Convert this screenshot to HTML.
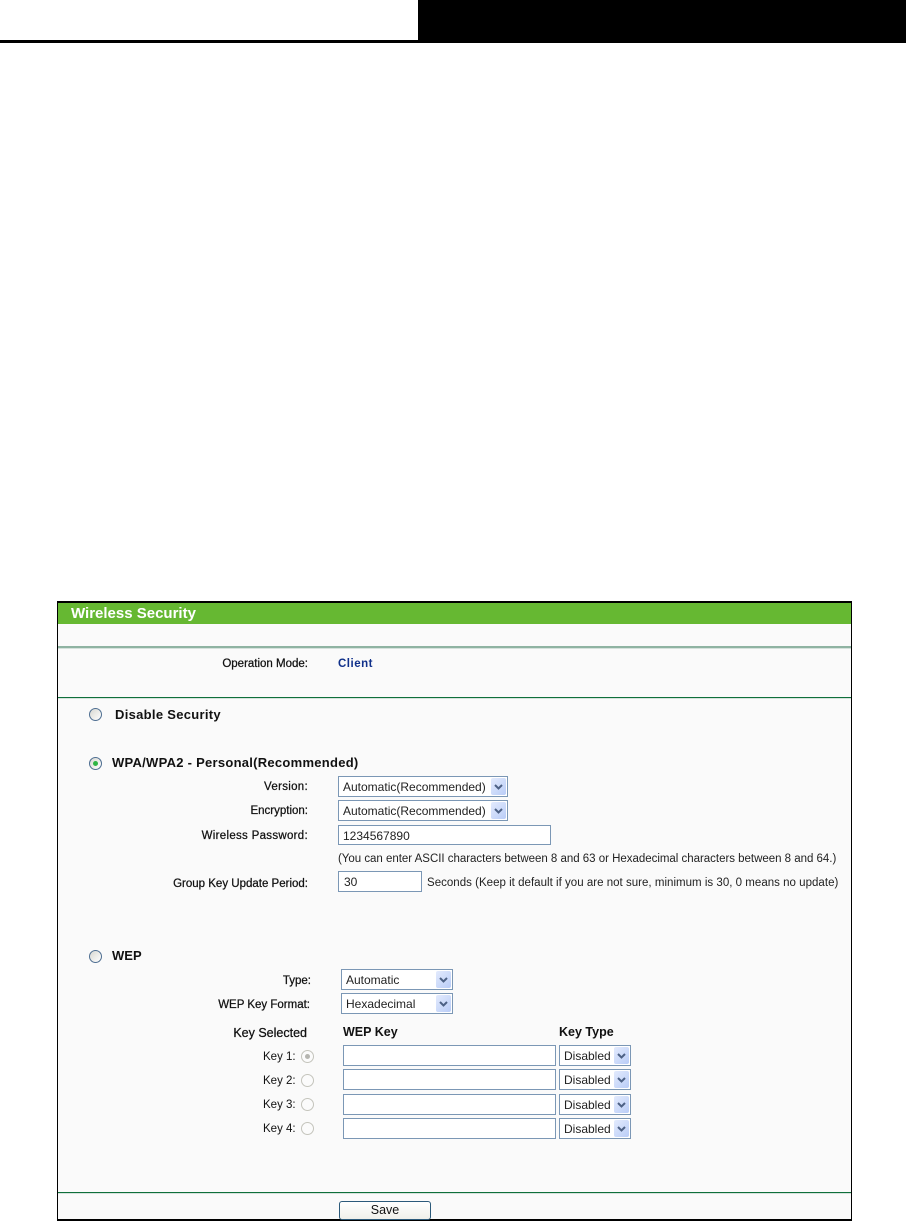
<!DOCTYPE html>
<html><head><meta charset="utf-8"><style>
html,body{margin:0;padding:0;background:#fff}
body{position:relative;width:906px;height:1221px;overflow:hidden;font-family:"Liberation Sans",Arial,sans-serif;color:#000}
div{position:absolute;box-sizing:border-box}
.t{white-space:nowrap;line-height:16px;height:16px;font-size:11.5px;color:#111}
.r{text-align:right;-webkit-text-stroke:.25px #111}
.b{font-weight:bold;font-size:13px}
.sel{background:#fff;border:1px solid #7b97b5;font-size:12px;line-height:21px;padding-left:4px;white-space:nowrap;color:#222}
.arr{position:absolute;top:1px;right:1px;bottom:1px;width:15px;background:linear-gradient(135deg,#e3ebfd,#b9ccf7);border-radius:2px}
.arr svg{position:absolute;left:3px;top:6px}
.rad{width:13px;height:13px;border-radius:50%;border:1px solid #4f6f92;background:linear-gradient(135deg,#d8d8d2,#fff)}
.rad.d{border-color:#c4c4bc;background:#fbfbfb}
.dot{position:absolute;left:3px;top:3px;width:5px;height:5px;border-radius:50%;background:#2fb544}
.dd{position:absolute;left:3px;top:3px;width:5px;height:5px;border-radius:50%;background:#b5b5b0}
</style></head><body>
<div style="left:0;top:40px;width:906px;height:3px;background:#000"></div>
<div style="left:418px;top:0;width:488px;height:43px;background:#000"></div>

<div style="left:57px;top:601px;width:795px;height:620px;background:#fafafa;border:1px solid #000;border-bottom-width:2px;border-top:2px solid #000"></div>
<div style="left:58px;top:603px;width:793px;height:21px;background:#66b832"></div>
<div class="t" style="left:71px;top:606px;color:#fff;font-weight:bold;font-size:15px">Wireless Security</div>
<div style="left:58px;top:646px;width:793px;height:2px;background:#8fb3a2"></div>
<div style="left:58px;top:648px;width:793px;height:1px;background:#d5e2dc"></div>
<div style="left:58px;top:697px;width:793px;height:1px;background:#0f6f3a"></div>
<div style="left:58px;top:698px;width:793px;height:1px;background:#d5e2dc"></div>
<div style="left:58px;top:1192px;width:793px;height:1px;background:#0f6f3a"></div>
<div style="left:58px;top:1193px;width:793px;height:1px;background:#d5e2dc"></div>

<div class="t r" style="right:598px;top:656px;font-size:11.5px">Operation Mode:</div>
<div class="t" style="left:338px;top:656px;color:#10308a;font-weight:bold;font-size:11.5px;letter-spacing:.5px">Client</div>

<div class="rad" style="left:89px;top:708px"></div>
<div class="t b" style="left:115px;top:707px;letter-spacing:.3px">Disable Security</div>
<div class="rad" style="left:89px;top:757px"><div class="dot"></div></div>
<div class="t b" style="left:112px;top:755px;letter-spacing:.27px">WPA/WPA2 - Personal(Recommended)</div>

<div class="t r" style="right:598px;top:779px;letter-spacing:.3px">Version:</div>
<div class="sel" style="left:338px;top:776px;width:170px;height:21px">Automatic(Recommended)<div class="arr"><svg width="9" height="7"><path d="M1 1L4.5 4.5L8 1" fill="none" stroke="#4d6185" stroke-width="2"/></svg></div></div>
<div class="t r" style="right:598px;top:803px">Encryption:</div>
<div class="sel" style="left:338px;top:800px;width:170px;height:21px">Automatic(Recommended)<div class="arr"><svg width="9" height="7"><path d="M1 1L4.5 4.5L8 1" fill="none" stroke="#4d6185" stroke-width="2"/></svg></div></div>
<div class="t r" style="right:598px;top:828px;letter-spacing:.3px">Wireless Password:</div>
<div class="sel" style="left:338px;top:825px;width:213px;height:20px;padding-left:4px;line-height:20px">1234567890</div>
<div class="t" style="left:338px;top:851px;font-size:11.5px;letter-spacing:-.02px;color:#222">(You can enter ASCII characters between 8 and 63 or Hexadecimal characters between 8 and 64.)</div>
<div class="t r" style="right:598px;top:876px">Group Key Update Period:</div>
<div class="sel" style="left:338px;top:871px;width:84px;height:21px;padding-left:5px">30</div>
<div class="t" style="left:427px;top:875px;font-size:11.5px;letter-spacing:.02px;color:#222">Seconds (Keep it default if you are not sure, minimum is 30, 0 means no update)</div>

<div class="rad" style="left:89px;top:950px"></div>
<div class="t b" style="left:112px;top:948px">WEP</div>

<div class="t r" style="right:595px;top:973px">Type:</div>
<div class="sel" style="left:341px;top:969px;width:112px;height:21px">Automatic<div class="arr"><svg width="9" height="7"><path d="M1 1L4.5 4.5L8 1" fill="none" stroke="#4d6185" stroke-width="2"/></svg></div></div>
<div class="t r" style="right:596px;top:997px">WEP Key Format:</div>
<div class="sel" style="left:341px;top:993px;width:112px;height:21px">Hexadecimal<div class="arr"><svg width="9" height="7"><path d="M1 1L4.5 4.5L8 1" fill="none" stroke="#4d6185" stroke-width="2"/></svg></div></div>

<div class="t r" style="right:599px;top:1025px;font-size:12.5px">Key Selected</div>
<div class="t b" style="left:343px;top:1024px;font-size:12.5px">WEP Key</div>
<div class="t b" style="left:559px;top:1024px;font-size:12.5px">Key Type</div>

<div class="t" style="left:263px;top:1049px">Key 1:</div>
<div class="rad d" style="left:301px;top:1050px"><div class="dd"></div></div>
<div class="sel" style="left:343px;top:1045px;width:213px;height:21px"></div>
<div class="sel" style="left:559px;top:1045px;width:72px;height:21px">Disabled<div class="arr"><svg width="9" height="7"><path d="M1 1L4.5 4.5L8 1" fill="none" stroke="#4d6185" stroke-width="2"/></svg></div></div>

<div class="t" style="left:263px;top:1073px">Key 2:</div>
<div class="rad d" style="left:301px;top:1074px"></div>
<div class="sel" style="left:343px;top:1069px;width:213px;height:21px"></div>
<div class="sel" style="left:559px;top:1069px;width:72px;height:21px">Disabled<div class="arr"><svg width="9" height="7"><path d="M1 1L4.5 4.5L8 1" fill="none" stroke="#4d6185" stroke-width="2"/></svg></div></div>

<div class="t" style="left:263px;top:1097px">Key 3:</div>
<div class="rad d" style="left:301px;top:1098px"></div>
<div class="sel" style="left:343px;top:1094px;width:213px;height:21px"></div>
<div class="sel" style="left:559px;top:1094px;width:72px;height:21px">Disabled<div class="arr"><svg width="9" height="7"><path d="M1 1L4.5 4.5L8 1" fill="none" stroke="#4d6185" stroke-width="2"/></svg></div></div>

<div class="t" style="left:263px;top:1121px">Key 4:</div>
<div class="rad d" style="left:301px;top:1122px"></div>
<div class="sel" style="left:343px;top:1118px;width:213px;height:21px"></div>
<div class="sel" style="left:559px;top:1118px;width:72px;height:21px">Disabled<div class="arr"><svg width="9" height="7"><path d="M1 1L4.5 4.5L8 1" fill="none" stroke="#4d6185" stroke-width="2"/></svg></div></div>

<div style="left:339px;top:1201px;width:92px;height:19px;border:1px solid #2c5a7a;border-radius:3px;background:linear-gradient(#fff,#f0f0ea);text-align:center;font-size:12.5px;line-height:17px;color:#111">Save</div>
</body></html>
